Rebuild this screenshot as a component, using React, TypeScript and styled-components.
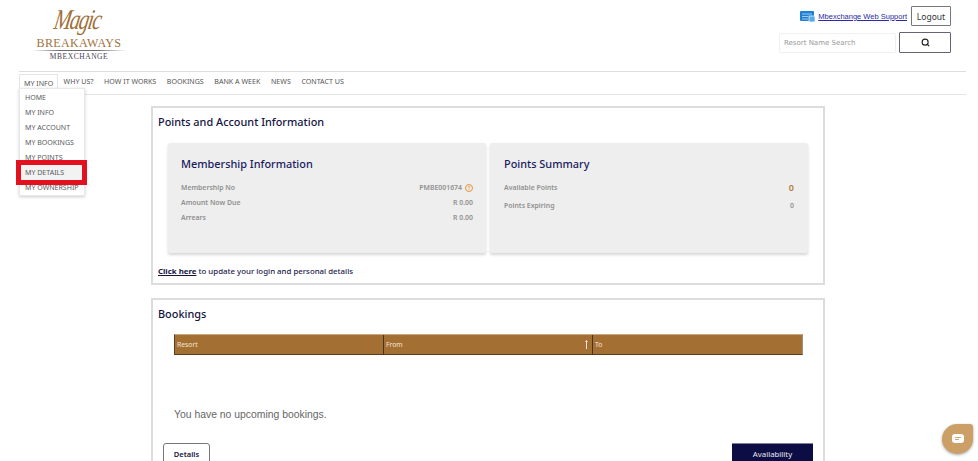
import { Search } from "lucide-react";
import styled, { createGlobalStyle } from "styled-components";

const GlobalStyle = createGlobalStyle`
  html, body {
    margin: 0;
    padding: 0;
    height: 461px;
    overflow: hidden;
    background: #fff;
    font-family: "Noto Sans", sans-serif;
  }
  * { box-sizing: border-box; }
`;

const Page = styled.div`
  width: 978px;
  height: 461px;
  overflow: hidden;
  position: relative;
`;

const Header = styled.header`
  height: 71px;
  margin: 0 21px 0 19px;
  padding: 6px 6px 0 15px;
  display: flex;
  justify-content: space-between;
  align-items: flex-start;
`;

const Logo = styled.div`
  width: 90px;
  display: flex;
  flex-direction: column;
  align-items: center;
  color: #8a5f2e;
  font-family: "Liberation Serif", serif;
`;

const LogoScript = styled.div`
  font-size: 25px;
  line-height: 30px;
  height: 32px;
  margin: 1px 10px 0 0;
  font-style: italic;
  letter-spacing: -1.5px;
  color: #a06f38;
  transform: scale(0.82, 1.15) skewX(-14deg);
  transform-origin: center bottom;
`;

const LogoName = styled.div`
  font-size: 12px;
  line-height: 10px;
  margin-top: -1px;
  letter-spacing: 0.35px;
  white-space: nowrap;
  color: #a0713c;
`;

const LogoRule = styled.div`
  width: 94px;
  height: 1px;
  margin-top: 2px;
  background: linear-gradient(to right, #fff, #6d6a70 30%, #6d6a70 70%, #fff);
`;

const LogoSub = styled.div`
  font-size: 7.5px;
  line-height: 9px;
  margin-top: 1px;
  letter-spacing: 0.55px;
  color: #4a4455;
`;

const HeaderTools = styled.div`
  display: flex;
  flex-direction: column;
  align-items: flex-end;
  gap: 6px;
`;

const SupportRow = styled.div`
  display: flex;
  align-items: center;
  height: 20px;
`;

const SupportLink = styled.a`
  font-family: "Liberation Sans", sans-serif;
  font-size: 7.5px;
  color: #2a2aa8;
  text-decoration: underline;
  margin: 0 4px 0 3px;
`;

const LogoutButton = styled.button`
  width: 40px;
  height: 20px;
  padding: 0;
  background: #fff;
  border: 1px solid #77757f;
  border-radius: 1px;
  font-family: "Noto Sans", sans-serif;
  font-size: 8.5px;
  color: #333;
`;

const SearchRow = styled.div`
  display: flex;
  align-items: center;
  gap: 3px;
`;

const SearchInput = styled.div`
  width: 117px;
  height: 20px;
  padding-left: 4px;
  border: 1px solid #efefef;
  border-radius: 2px;
  font-family: "DejaVu Sans", sans-serif;
  font-size: 7px;
  line-height: 18px;
  color: #999;
`;

const SearchButton = styled.button`
  width: 52px;
  height: 21px;
  padding: 0;
  display: flex;
  align-items: center;
  justify-content: center;
  background: #fff;
  border: 1px solid #66627a;
  border-radius: 1px;
  color: #222;
`;

const Nav = styled.nav`
  height: 24px;
  margin: 0 12px 0 19px;
  display: flex;
  align-items: flex-end;
  border-top: 1px solid #dedede;
  border-bottom: 1px solid #e2e4e8;
  position: relative;
`;

const NavItem = styled.div<{ $active?: boolean }>`
  height: 21px;
  padding: 0 5.3px;
  font-size: 7.1px;
  line-height: 17px;
  color: #555;
  white-space: nowrap;
  ${(p) => p.$active && "border: 1px solid #e6e6e6; border-bottom: none; background: #fff; margin-bottom: -1px; padding: 0 4px;"}
`;

const Dropdown = styled.div`
  position: absolute;
  left: 19px;
  top: 88px;
  width: 66px;
  height: 108px;
  padding-top: 1px;
  background: #fff;
  border: 1px solid #e8e8e8;
  box-shadow: 0 1px 3px rgba(0, 0, 0, 0.2);
  z-index: 4;
`;

const DropdownItem = styled.div<{ $hover?: boolean }>`
  height: 15px;
  padding-left: 5px;
  font-size: 7.05px;
  line-height: 15px;
  color: #5a5a5a;
  white-space: nowrap;
  background: ${(p) => (p.$hover ? "#f2f2f2" : "transparent")};
`;

const Highlight = styled.div`
  position: absolute;
  left: 16px;
  top: 160px;
  width: 71px;
  height: 25px;
  border: 5px solid #e3101f;
  z-index: 5;
`;

const Main = styled.main`
  width: 674px;
  margin: 11px 0 0 151px;
  display: flex;
  flex-direction: column;
  gap: 13px;
`;

const Panel = styled.section<{ $open?: boolean }>`
  position: relative;
  height: ${(p) => (p.$open ? "200px" : "179px")};
  padding: 0 5px;
  border: 2px solid #dcdcdc;
  ${(p) => p.$open && "border-bottom: none;"}
`;

const PanelTitle = styled.h2`
  margin: 0;
  padding-top: 5px;
  font-size: 10.9px;
  line-height: 18px;
  font-weight: 500;
  color: #14143f;
`;

const CardRow = styled.div`
  display: grid;
  grid-template-columns: 318px 318px;
  gap: 4px;
  margin: 12px 0 0 10px;
`;

const Card = styled.div<{ $tight?: boolean }>`
  height: 110px;
  padding: ${(p) => (p.$tight ? "11px 14px" : "11px 13px")};
  background: #eeeeee;
  border-radius: 2px;
  box-shadow: 0 2px 3px rgba(0, 0, 0, 0.16);
`;

const CardTitle = styled.h3`
  margin: 0 0 6px;
  font-size: 10.9px;
  line-height: 20px;
  font-weight: 500;
  color: #1b1b5e;
`;

const InfoRow = styled.div<{ $gap?: number }>`
  display: flex;
  justify-content: space-between;
  align-items: center;
  height: 15px;
  margin-bottom: ${(p) => p.$gap ?? 0}px;
  font-size: 6.9px;
  font-weight: 600;
  color: #909090;
`;

const Value = styled.span`
  display: flex;
  align-items: center;
  gap: 3px;
`;

const Points = styled.span`
  font-size: 9px;
  color: #b47a3a;
`;

const HelpBadge = styled.span`
  width: 8px;
  height: 8px;
  border: 1px solid #e8933a;
  border-radius: 50%;
  font-size: 5.5px;
  line-height: 6px;
  text-align: center;
  color: #e8933a;
`;

const UpdateLine = styled.p`
  margin: 11px 0 0;
  font-size: 7.85px;
  font-weight: 500;
  line-height: 14px;
  color: #23234f;
`;

const UpdateLink = styled.a`
  color: #14143f;
  font-weight: 700;
  text-decoration: underline;
`;

const TableHead = styled.div`
  display: grid;
  grid-template-columns: 209px 209px 1fr;
  height: 21px;
  margin: 11px 15px 0 16px;
  background: #a46f33;
  border-top: 1px solid #c7a77f;
  border-bottom: 1px solid #5b3f20;
  border-left: 1px solid #5b3f20;
  border-right: 1px solid #a09080;
`;

const HeadCell = styled.div`
  position: relative;
  padding-left: 2px;
  font-size: 6.8px;
  line-height: 20px;
  color: #f3e6d6;
  border-right: 1px solid #4d3418;

  &:last-child {
    border-right: none;
  }
`;

const SortMark = styled.svg`
  position: absolute;
  right: 4px;
  top: 5px;
`;

const EmptyText = styled.p`
  margin: 53px 0 0 16px;
  font-family: "Liberation Sans", sans-serif;
  font-size: 10.4px;
  line-height: 14px;
  color: #666;
`;

const ActionRow = styled.div`
  display: flex;
  justify-content: space-between;
  margin: 21px 5px 0 5px;
`;

const DetailsButton = styled.button`
  width: 47px;
  height: 24px;
  padding: 0 0 2px;
  background: #fff;
  border: 1px solid #77757f;
  border-radius: 3px;
  font-family: "Noto Sans", sans-serif;
  font-size: 7.5px;
  font-weight: 600;
  color: #14143f;
`;

const AvailabilityButton = styled.button`
  width: 81px;
  height: 24px;
  padding: 0 0 4px;
  background: #0d0d45;
  border: none;
  border-top: 1px solid #7f7fa0;
  font-family: "Noto Sans", sans-serif;
  font-size: 7.8px;
  color: #e8e8f2;
`;

const ChatBubble = styled.div`
  position: absolute;
  left: 942px;
  top: 424px;
  width: 31px;
  height: 30px;
  display: flex;
  align-items: center;
  justify-content: center;
  background: #cb9f66;
  border-radius: 50% 3px 50% 50%;
  box-shadow: 0 1px 3px rgba(0, 0, 0, 0.35);
`;

export default function App() {
  return (
    <Page>
      <GlobalStyle />
      <Header>
        <Logo>
          <LogoScript>Magic</LogoScript>
          <LogoName>BREAKAWAYS</LogoName>
          <LogoRule />
          <LogoSub>MBEXCHANGE</LogoSub>
        </Logo>
        <HeaderTools>
          <SupportRow>
            <svg width="15" height="11" viewBox="0 0 15 11">
              <rect x="0" y="0" width="14" height="10" rx="1" fill="#1f7fd0" />
              <path d="M2 3h10M2 5.5h6M2 8h6" stroke="#bfe0f7" strokeWidth="0.8" />
              <rect x="9" y="5" width="6" height="6" fill="#5aa9e6" stroke="#fff" strokeWidth="0.7" />
            </svg>
            <SupportLink>Mbexchange Web Support</SupportLink>
            <LogoutButton>Logout</LogoutButton>
          </SupportRow>
          <SearchRow>
            <SearchInput>Resort Name Search</SearchInput>
            <SearchButton>
              <Search size={9} strokeWidth={3} />
            </SearchButton>
          </SearchRow>
        </HeaderTools>
      </Header>
      <Nav>
        <NavItem $active>MY INFO</NavItem>
        <NavItem>WHY US?</NavItem>
        <NavItem>HOW IT WORKS</NavItem>
        <NavItem>BOOKINGS</NavItem>
        <NavItem>BANK A WEEK</NavItem>
        <NavItem>NEWS</NavItem>
        <NavItem>CONTACT US</NavItem>
      </Nav>
      <Dropdown>
        <DropdownItem>HOME</DropdownItem>
        <DropdownItem>MY INFO</DropdownItem>
        <DropdownItem>MY ACCOUNT</DropdownItem>
        <DropdownItem>MY BOOKINGS</DropdownItem>
        <DropdownItem>MY POINTS</DropdownItem>
        <DropdownItem $hover>MY DETAILS</DropdownItem>
        <DropdownItem>MY OWNERSHIP</DropdownItem>
      </Dropdown>
      <Highlight />
      <Main>
        <Panel>
          <PanelTitle>Points and Account Information</PanelTitle>
          <CardRow>
            <Card>
              <CardTitle>Membership Information</CardTitle>
              <InfoRow>
                <span>Membership No</span>
                <Value>
                  PMBE001674 <HelpBadge>?</HelpBadge>
                </Value>
              </InfoRow>
              <InfoRow>
                <span>Amount Now Due</span>
                <span>R 0.00</span>
              </InfoRow>
              <InfoRow>
                <span>Arrears</span>
                <span>R 0.00</span>
              </InfoRow>
            </Card>
            <Card $tight>
              <CardTitle>Points Summary</CardTitle>
              <InfoRow $gap={3}>
                <span>Available Points</span>
                <Points>0</Points>
              </InfoRow>
              <InfoRow>
                <span>Points Expiring</span>
                <span>0</span>
              </InfoRow>
            </Card>
          </CardRow>
          <UpdateLine>
            <UpdateLink>Click here</UpdateLink> to update your login and personal details
          </UpdateLine>
        </Panel>
        <Panel $open>
          <PanelTitle>Bookings</PanelTitle>
          <TableHead>
            <HeadCell>Resort</HeadCell>
            <HeadCell>
              From
              <SortMark width="3" height="9" viewBox="0 0 3 9">
                <path d="M1.5 0L3 2H2v7H1V2H0z" fill="#f3e6d6" />
              </SortMark>
            </HeadCell>
            <HeadCell>To</HeadCell>
          </TableHead>
          <EmptyText>You have no upcoming bookings.</EmptyText>
          <ActionRow>
            <DetailsButton>Details</DetailsButton>
            <AvailabilityButton>Availability</AvailabilityButton>
          </ActionRow>
        </Panel>
      </Main>
      <ChatBubble>
        <svg width="12" height="10" viewBox="0 0 12 10">
          <rect x="0" y="0" width="12" height="9" rx="3" fill="#fff" />
          <path d="M3 3.5h6M3 5.5h4" stroke="#cb9f66" strokeWidth="0.9" />
        </svg>
      </ChatBubble>
    </Page>
  );
}
